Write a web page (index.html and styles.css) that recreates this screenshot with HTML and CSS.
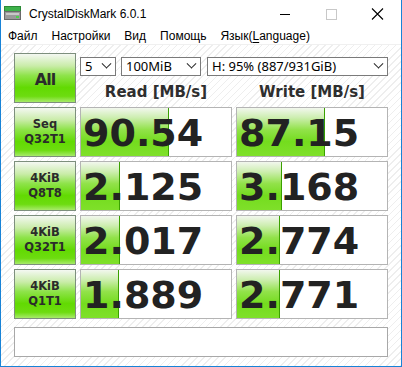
FILE: index.html
```html
<!DOCTYPE html>
<html lang="ru">
<head>
    <meta charset="UTF-8">
    <title>CrystalDiskMark 6.0.1</title>
    <link rel="stylesheet" href="styles.css">
</head>
<body>
    <div class="window">
        <div class="titlebar">
            <svg class="app-icon" width="17" height="15" viewBox="0 0 17 15">
                <rect x="0.5" y="0.5" width="16" height="5" fill="#3db24a" stroke="#2b8a36"/>
                <rect x="0.5" y="5.5" width="16" height="8" fill="#9a9a9a" stroke="#6a6a6a"/>
                <rect x="2" y="7" width="13" height="2" fill="#c8c8c8"/>
                <rect x="12" y="10" width="3" height="2" fill="#4cd24c"/>
            </svg>
            <span class="title">CrystalDiskMark 6.0.1</span>
            <div class="controls">
                <svg width="46" height="28" viewBox="0 0 46 28"><path d="M17 14.5h10" stroke="#000" stroke-width="1"/></svg>
                <svg width="46" height="28" viewBox="0 0 46 28"><rect x="17.5" y="9.5" width="10" height="10" fill="none" stroke="#c8c8c8"/></svg>
                <svg width="46" height="28" viewBox="0 0 46 28"><path d="M17 8.5l11 11M28 8.5l-11 11" stroke="#000" stroke-width="1.1"/></svg>
            </div>
        </div>

        <div class="menubar">
            <span class="menu-item">Файл</span>
            <span class="menu-item">Настройки</span>
            <span class="menu-item">Вид</span>
            <span class="menu-item">Помощь</span>
            <span class="menu-item">Язык(<u>L</u>anguage)</span>
        </div>

        <div class="content">
            <div class="bench-grid">
                <div class="test-btn all-btn">All</div>
                <div class="top-panel">
                    <div class="selects">
                        <div class="combo combo-count">5<span class="chev"></span></div>
                        <div class="combo combo-size">100MiB<span class="chev"></span></div>
                        <div class="combo combo-drive">H: 95% (887/931GiB)<span class="chev"></span></div>
                    </div>
                    <div class="headers">
                        <div class="col-head">Read [MB/s]</div>
                        <div class="col-head">Write [MB/s]</div>
                    </div>
                </div>

                <div class="test-btn">Seq<br>Q32T1</div>
                <div class="result" style="--w: 88px">90.54</div>
                <div class="result" style="--w: 88px">87.15</div>

                <div class="test-btn">4KiB<br>Q8T8</div>
                <div class="result" style="--w: 39px">2.125</div>
                <div class="result" style="--w: 45px">3.168</div>

                <div class="test-btn">4KiB<br>Q32T1</div>
                <div class="result" style="--w: 39px">2.017</div>
                <div class="result" style="--w: 43px">2.774</div>

                <div class="test-btn">4KiB<br>Q1T1</div>
                <div class="result" style="--w: 38px">1.889</div>
                <div class="result" style="--w: 43px">2.771</div>
            </div>
            <div class="comment"></div>
        </div>
    </div>
</body>
</html>
```

FILE: styles.css
```css
* {
    margin: 0;
    padding: 0;
    box-sizing: border-box;
}

body {
    background-color: white;
    font-family: "Liberation Sans", Arial, sans-serif;
    color: #000;
}

.window {
    width: 402px;
    height: 367px;
    border: 1px solid #1883d7;
    border-top: none;
    background-color: white;
    display: flex;
    flex-direction: column;
}

.titlebar {
    height: 28px;
    display: flex;
    align-items: center;
    padding-left: 3px;
}

.app-icon {
    margin-right: 8px;
    margin-top: -2px;
}

.title {
    font-size: 12px;
    margin-top: -1px;
}

.controls {
    margin-left: auto;
    display: flex;
    align-items: center;
}

.menubar {
    height: 17px;
    display: flex;
    align-items: center;
    gap: 14px;
    padding-left: 7px;
    font-size: 12px;
    border-bottom: 1px solid #f0f0f0;
}

.menu-item u {
    text-decoration-thickness: 1px;
    text-underline-offset: 2px;
}

.content {
    flex: 1;
    padding: 8px 13px 0 13px;
    background-color: #fff;
    background-image: repeating-linear-gradient(135deg, #ffffff 0, #ffffff 4px, #eeeeee 4px, #eeeeee 5px);
}

.bench-grid {
    display: grid;
    grid-template-columns: 62px 152px 152px;
    grid-auto-rows: 50px;
    column-gap: 4px;
    row-gap: 4px;
}

.test-btn {
    border: 1px solid #7d8f7d;
    background: linear-gradient(to bottom, #f4f8f2 0%, #c9eca8 25%, #8ee34a 45%, #62da02 70%, #6ddc10 88%, #a7ea6a 100%);
    font-family: "DejaVu Sans", sans-serif;
    font-weight: bold;
    font-size: 11.5px;
    line-height: 15px;
    color: #2b2b2b;
    text-align: center;
    display: flex;
    align-items: center;
    justify-content: center;
}

.all-btn {
    font-size: 16px;
    letter-spacing: -1px;
    padding-top: 2px;
}

.top-panel {
    grid-column: 2 / 4;
    display: flex;
    flex-direction: column;
}

.selects {
    display: flex;
    gap: 5px;
    margin-top: 4px;
}

.combo {
    height: 19px;
    border: 1px solid #7a7a7a;
    background-color: white;
    font-family: "Noto Sans", sans-serif;
    font-size: 13px;
    line-height: 17px;
    padding-left: 4px;
    display: flex;
    align-items: center;
}

.combo-count {
    width: 36px;
}

.combo-size {
    width: 80px;
}

.combo-drive {
    width: 181px;
    margin-left: 1px;
}

.chev {
    margin-left: auto;
    margin-right: 5px;
    width: 7px;
    height: 7px;
    border-right: 1.5px solid #222;
    border-bottom: 1.5px solid #222;
    transform: rotate(45deg) translate(-2px, -2px);
}

.headers {
    display: grid;
    grid-template-columns: 152px 152px;
    column-gap: 4px;
    margin-top: 7px;
}

.col-head {
    text-align: center;
    font-family: "DejaVu Sans", sans-serif;
    font-weight: bold;
    font-size: 15px;
    color: #2e2e2e;
}

.result {
    border: 1px solid #b4b4b4;
    background-color: white;
    background-image:
        linear-gradient(#3aa000, #3aa000),
        linear-gradient(to bottom, #f2f7ee 0%, #cdeeb0 20%, #92e24a 45%, #74dc1e 70%, #7fe02a 100%);
    background-repeat: no-repeat;
    background-size: 1px 100%, var(--w) 100%;
    background-position: calc(var(--w) - 1px) 0, 0 0;
    font-family: "DejaVu Sans", sans-serif;
    font-weight: bold;
    font-size: 38px;
    color: #222;
    display: flex;
    align-items: center;
    padding-left: 2px;
    padding-top: 1px;
}

.comment {
    margin-top: 8px;
    height: 30px;
    border: 1px solid #a8a8a8;
    background-color: white;
}
```
